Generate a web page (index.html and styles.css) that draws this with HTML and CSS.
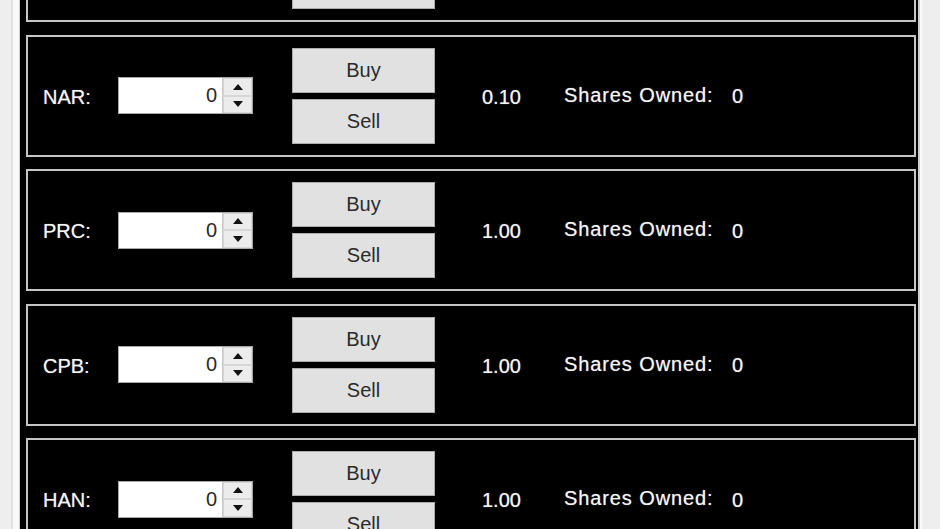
FILE: index.html
```html
<!DOCTYPE html>
<html>
<head>
<meta charset="utf-8">
<link rel="stylesheet" href="styles.css">
</head>
<body>
<div class="window">
  <div class="gutter gutter-left"></div>
  <div class="main">
    <div class="list">
      <div class="stock stock-partial">
        <div class="label"></div>
        <div class="spacer"></div>
        <div class="actions"><div class="btn btn-blank"></div><div class="btn btn-blank"></div></div>
      </div>
      <div class="stock">
        <div class="label">NAR:</div>
        <div class="spinner"><div class="field">0</div><div class="spin"><div class="spin-btn"><span class="arrow up"></span></div><div class="spin-btn"><span class="arrow down"></span></div></div></div>
        <div class="actions"><button class="btn">Buy</button><button class="btn">Sell</button></div>
        <div class="price">0.10</div>
        <div class="owned">Shares Owned:</div>
        <div class="count">0</div>
      </div>
      <div class="stock">
        <div class="label">PRC:</div>
        <div class="spinner"><div class="field">0</div><div class="spin"><div class="spin-btn"><span class="arrow up"></span></div><div class="spin-btn"><span class="arrow down"></span></div></div></div>
        <div class="actions"><button class="btn">Buy</button><button class="btn">Sell</button></div>
        <div class="price">1.00</div>
        <div class="owned">Shares Owned:</div>
        <div class="count">0</div>
      </div>
      <div class="stock">
        <div class="label">CPB:</div>
        <div class="spinner"><div class="field">0</div><div class="spin"><div class="spin-btn"><span class="arrow up"></span></div><div class="spin-btn"><span class="arrow down"></span></div></div></div>
        <div class="actions"><button class="btn">Buy</button><button class="btn">Sell</button></div>
        <div class="price">1.00</div>
        <div class="owned">Shares Owned:</div>
        <div class="count">0</div>
      </div>
      <div class="stock">
        <div class="label">HAN:</div>
        <div class="spinner"><div class="field">0</div><div class="spin"><div class="spin-btn"><span class="arrow up"></span></div><div class="spin-btn"><span class="arrow down"></span></div></div></div>
        <div class="actions"><button class="btn">Buy</button><button class="btn">Sell</button></div>
        <div class="price">1.00</div>
        <div class="owned">Shares Owned:</div>
        <div class="count">0</div>
      </div>
    </div>
  </div>
  <div class="gutter gutter-right"></div>
</div>
</body>
</html>
```

FILE: styles.css
```css
html, body {
  margin: 0;
  padding: 0;
  height: 100%;
  overflow: hidden;
  background: #efefef;
  font-family: "Liberation Sans", Arial, sans-serif;
  font-size: 20px;
}

.window {
  display: flex;
  height: 529px;
}

.gutter-left {
  width: 20px;
  flex: none;
  background: linear-gradient(to right, #eeeeee 0 11px, #e2e2e2 11px 13px, #f9f9f9 13px 19px, #cfcfcf 19px 20px);
}

.gutter-right {
  width: 22px;
  flex: none;
  background: linear-gradient(to right, #cfcfcf 0 2px, #f9f9f9 2px 4px, #eeeeee 4px);
}

.main {
  flex: 1;
  background: #000;
  padding: 0 2px 0 6px;
  overflow: hidden;
}

.list {
  display: flex;
  flex-direction: column;
  gap: 12.5px;
  margin-top: -100px;
}

.stock {
  height: 118px;
  flex: none;
  border: 2px solid #c6c6c6;
  display: flex;
  align-items: center;
  padding-left: 15px;
  color: #f4f4f4;
  text-shadow: 0 0 1px rgba(255, 255, 255, 0.6);
}

.label {
  width: 75px;
  flex: none;
  padding-top: 3px;
}

.spacer {
  width: 135px;
  flex: none;
}

.spinner {
  width: 133px;
  height: 35px;
  flex: none;
  border: 1px solid #a9a9a9;
  background: #fff;
  display: flex;
  text-shadow: none;
}

.field {
  flex: 1;
  text-align: right;
  color: #2a2a2a;
  padding-right: 5px;
  padding-top: 1px;
  line-height: 33px;
}

.spin {
  width: 29px;
  display: flex;
  flex-direction: column;
  border-left: 1px solid #c8c8c8;
}

.spin-btn {
  flex: 1;
  background: #ececec;
  border: 1px solid #d6d6d6;
  display: flex;
  align-items: center;
  justify-content: center;
}

.arrow {
  width: 0;
  height: 0;
  border-left: 5px solid transparent;
  border-right: 5px solid transparent;
}

.arrow.up {
  border-bottom: 6px solid #111;
}

.arrow.down {
  border-top: 6px solid #111;
}

.actions {
  margin-left: 39px;
  width: 143px;
  flex: none;
  display: flex;
  flex-direction: column;
  gap: 6px;
}

.btn {
  height: 45px;
  box-sizing: border-box;
  background: #e1e1e1;
  border: 1px solid #adadad;
  font-family: "Liberation Sans", Arial, sans-serif;
  font-size: 20px;
  color: #2b2b2b;
  padding: 0;
  text-shadow: none;
}

.price {
  margin-left: 47px;
  width: 82px;
  flex: none;
  padding-top: 3px;
}

.owned {
  width: 168px;
  flex: none;
  letter-spacing: 0.9px;
  padding-bottom: 1px;
}

.count {
  padding-top: 2px;
}
```
